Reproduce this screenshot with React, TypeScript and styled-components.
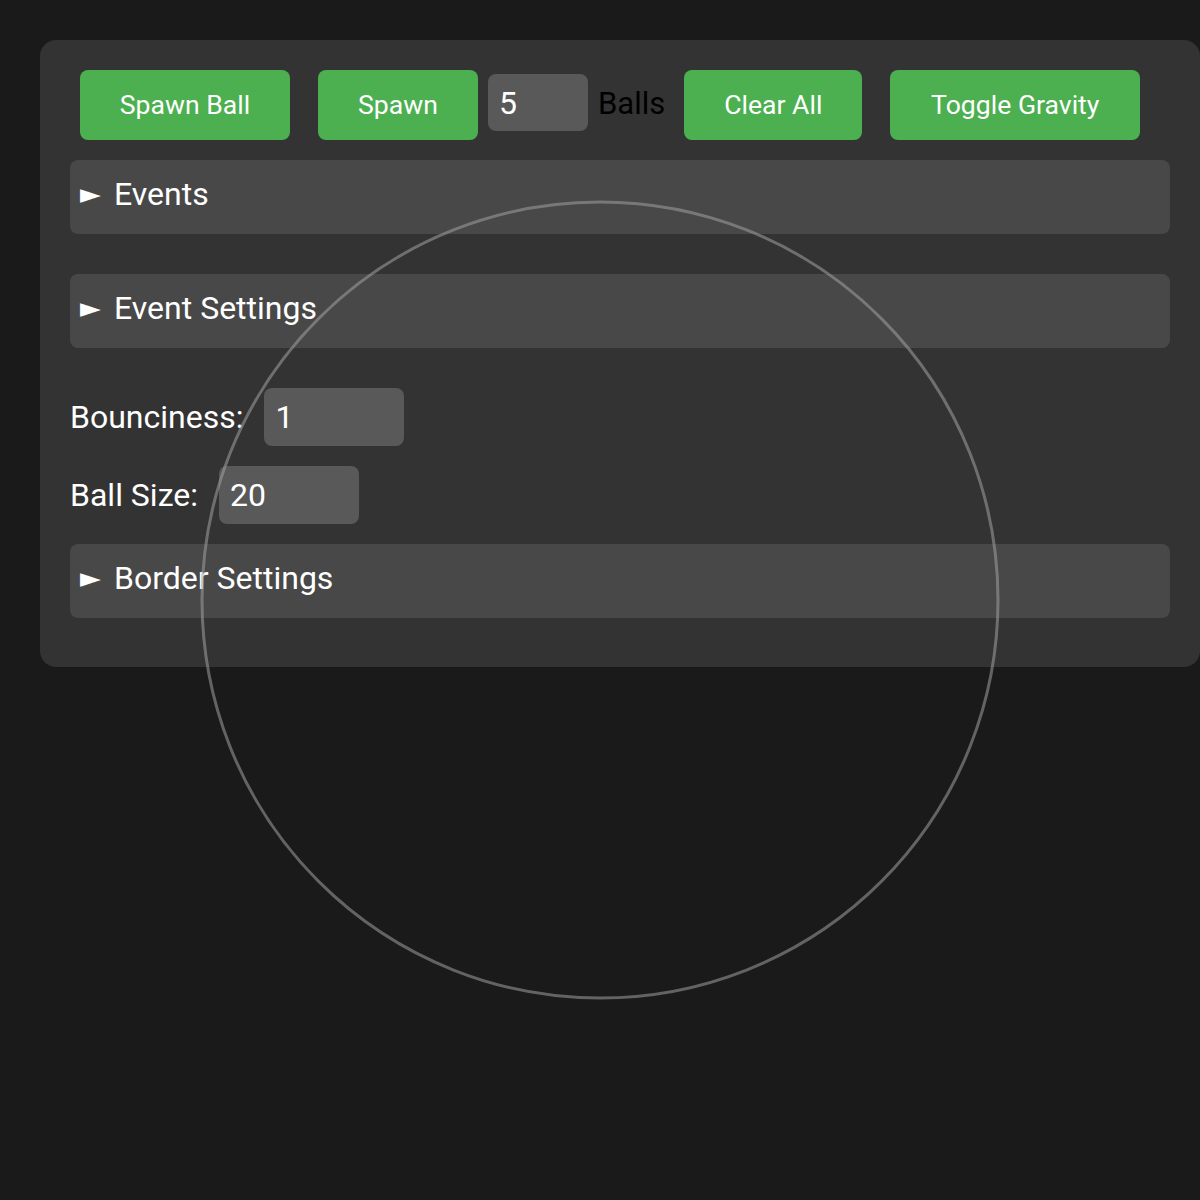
import React from "react";
import styled, { createGlobalStyle } from "styled-components";

const Global = createGlobalStyle`
  html, body { margin: 0; padding: 0; background: #1a1a1a; }
  body { font-family: Roboto, "Liberation Sans", sans-serif; width: 1200px; height: 1200px; overflow: hidden; }
  #root { position: relative; width: 1200px; height: 1200px; display: flow-root; }
`;

const Panel = styled.div`
  position: relative;
  margin: 40px 0 0 40px;
  width: 1160px;
  box-sizing: border-box;
  padding: 30px 30px 49px 30px;
  background: #333333;
  border-radius: 16px;
`;

const Toolbar = styled.div`
  display: flex;
  align-items: center;
  padding-left: 10px;
  margin-bottom: 20px;
`;

const Button = styled.button<{ $w: number; $mr: number }>`
  width: ${(p) => p.$w}px;
  height: 70px;
  margin-right: ${(p) => p.$mr}px;
  background: #4caf50;
  color: #ffffff;
  border: none;
  border-radius: 8px;
  font-family: Roboto, "Liberation Sans", sans-serif;
  font-size: 26.6px;
  padding: 0 0 2px 0;
  flex: none;
`;

const NumberInput = styled.div<{ $w: number; $h: number; $lift?: number }>`
  width: ${(p) => p.$w}px;
  height: ${(p) => p.$h}px;
  margin-bottom: ${(p) => p.$lift ?? 0}px;
  box-sizing: border-box;
  background: #595959;
  border-radius: 8px;
  color: #ffffff;
  font-size: 32px;
  display: flex;
  align-items: center;
  padding-left: 11px;
  flex: none;
`;

const BallsLabel = styled.span`
  color: #000000;
  font-size: 31px;
  margin: 0 19px 4px 10px;
`;

const Details = styled.div<{ $mb: number }>`
  height: 74px;
  box-sizing: border-box;
  background: #484848;
  border-radius: 8px;
  display: flex;
  align-items: center;
  padding: 0 0 7px 10px;
  margin-bottom: ${(p) => p.$mb}px;
  color: #ffffff;
  font-size: 32px;
`;

const Arrow = styled.span`
  font-family: "DejaVu Sans", sans-serif;
  font-size: 27px;
  width: 34px;
  display: inline-block;
`;

const FieldRow = styled.div`
  display: flex;
  align-items: center;
  margin-bottom: 20px;
  color: #ffffff;
  font-size: 32px;
`;

const Label = styled.span`
  margin-right: 21px;
`;

const Circle = styled.svg`
  position: absolute;
  left: 200px;
  top: 200px;
  pointer-events: none;
`;

export default function App() {
  return (
    <>
      <Global />
      <Panel>
        <Toolbar>
          <Button $w={210} $mr={28}>Spawn Ball</Button>
          <Button $w={160} $mr={10}>Spawn</Button>
          <NumberInput $w={100} $h={57} $lift={5}>5</NumberInput>
          <BallsLabel>Balls</BallsLabel>
          <Button $w={178} $mr={28}>Clear All</Button>
          <Button $w={250} $mr={0}>Toggle Gravity</Button>
        </Toolbar>
        <Details $mb={40}>
          <Arrow>►</Arrow>Events
        </Details>
        <Details $mb={40}>
          <Arrow>►</Arrow>Event Settings
        </Details>
        <FieldRow>
          <Label>Bounciness:</Label>
          <NumberInput $w={140} $h={58}>1</NumberInput>
        </FieldRow>
        <FieldRow>
          <Label>Ball Size:</Label>
          <NumberInput $w={140} $h={58}>20</NumberInput>
        </FieldRow>
        <Details $mb={0}>
          <Arrow>►</Arrow>Border Settings
        </Details>
      </Panel>
      <Circle width="800" height="800" viewBox="0 0 800 800">
        <circle cx="400" cy="400" r="398" fill="none" stroke="rgba(160,160,160,0.55)" strokeWidth="3" />
      </Circle>
    </>
  );
}
